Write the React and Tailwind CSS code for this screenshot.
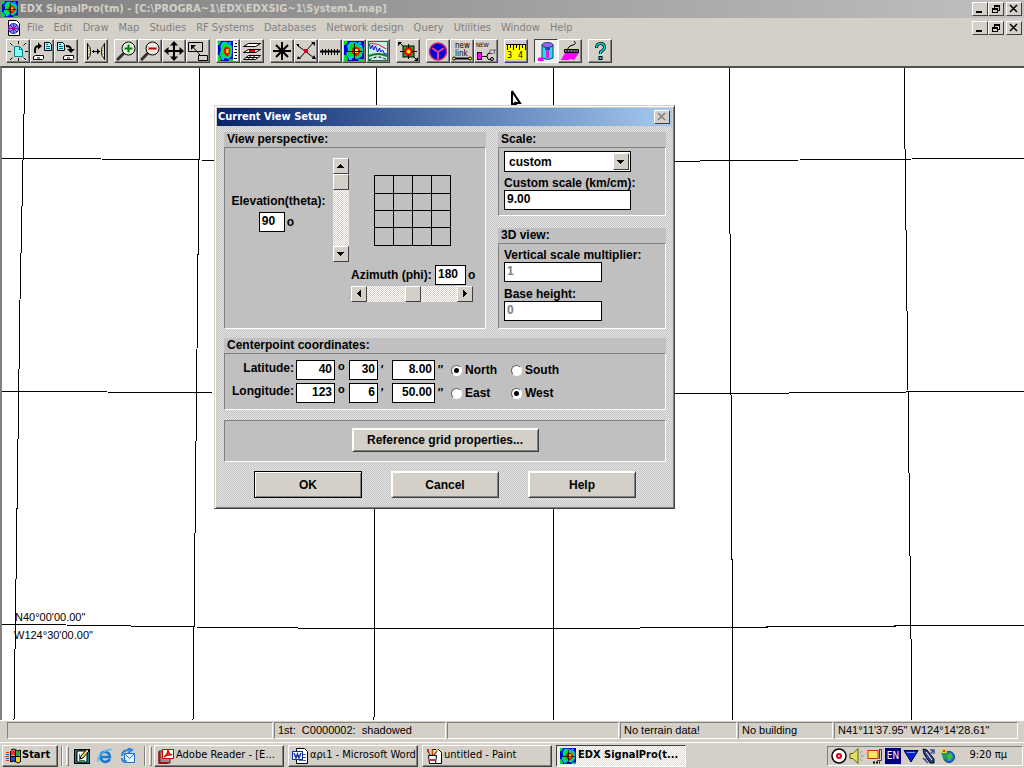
import React from "react";

const RAISED = "border border-t-white border-l-white border-b-[#404040] border-r-[#404040] bg-[#d4d0c8]";
const SUNK = "border border-t-[#808080] border-l-[#808080] border-b-white border-r-white";
const UI = "font-['DejaVu_Sans_Condensed','DejaVu_Sans',sans-serif]";

function Svg({ size = 20, children, className = "" }) {
  return (
    <svg width={size} height={size} viewBox={`0 0 ${size} ${size}`} className={`block shrink-0 ${className}`} fill="none" stroke="#000" strokeWidth="1" aria-hidden="true">
      {children}
    </svg>
  );
}

function HeatMap({ x = 0, w = 20, h = 20, cross = true }) {
  return (
    <svg x={x} width={w} height={h} viewBox="0 0 20 20" preserveAspectRatio="none">
      <rect width="20" height="20" fill="#0000d8" stroke="none" />
      <path d="M3 5l3-4h6l2 2 4 1 1 5-1 6-4 3-5-1-4 1-3-5 2-4z" fill="#00c8f0" stroke="none" />
      <path d="M5 6l2-4h5l2 3 3 1 1 4-2 5-4 2-4-2-3 1-2-4 3-3zM0 0h4L2 4H0zM0 14h2l2 4-1 2H0zM15 18h5v2h-6z" fill="#00e020" stroke="none" />
      <path d="M14 1h3v2h-3zM5 17h3v2H5z" fill="#00c8f0" stroke="none" />
      <path d="M10 6h3l3 2v4l-3 3h-2l-3-3V8z" fill="#f00" stroke="none" />
      <path d="M11 8h3v4h-3z" fill="#ffe800" stroke="none" />
      {cross && <path d="M10.500 2v16M2 10.500h16" stroke="#000" />}
    </svg>
  );
}

const disk = (x, y) => (
  <>
    <path d={`M${x + 0.5} ${y + 1.5}l2-1h8v3l-1 1h-9z`} fill="#fff" />
    <path d={`M${x + 4} ${y + 3}h3`} />
  </>
);
const doc = (x, y) => (
  <>
    <path d={`M${x + 0.5} ${y + 0.5}h5l2 2v6h-7z`} fill="#a8f8ff" />
    <path d={`M${x + 2} ${y + 2.5}h2M${x + 2} ${y + 4.5}h4M${x + 2} ${y + 6.500}h4`} stroke="#006080" />
  </>
);

const ICONS = {
  newDoc: (
    <>
      <path d="M6.500 5.500h5l3 3v7h-8z" fill="#8ff" stroke="#008080" />
      <path d="M11.500 5.500v3h3" stroke="#008080" />
      <path d="M10.500 0v3M10.500 17v3M0 10.500h3M17 10.500h3M2 2l2.500 2.500M18 2l-2.500 2.500M2 19l2.500-2.500M18 19l-2.500-2.500" />
    </>
  ),
  open: (
    <>
      {doc(12, 1)}
      {disk(1, 14)}
      <path d="M3 12V9q0-4 4-4" strokeWidth="2" />
      <path d="M6 1.500v7l4-3.500z" fill="#000" stroke="none" />
    </>
  ),
  save: (
    <>
      {doc(1, 1)}
      {disk(7, 14)}
      <path d="M10 5q5 0 5 4" strokeWidth="2" />
      <path d="M11 8h8l-4 4z" fill="#000" stroke="none" />
    </>
  ),
  between: (
    <>
      <path d="M1.500 2.500v16l1-2q2-1 2-6t-2-6zM18.500 2.500v16l-1-2q-2-1-2-6t2-6z" fill="#ffc" />
      <path d="M2 7h2M2 10h2M2 13h2M16 7h2M16 10h2M16 13h2" stroke="#909040" />
      <path d="M6 10.500h8M7.500 9v3" />
      <path d="M11 7.500v6l3-3z" fill="#000" stroke="none" />
    </>
  ),
  zoomIn: (
    <>
      <path d="M8 12l-7 7" stroke="#303030" strokeWidth="3" />
      <circle cx="12.500" cy="7.500" r="6.500" fill="#e0f4e0" />
      <path d="M12.500 3.500v8M8.500 7.500h8" stroke="#008000" strokeWidth="2" />
    </>
  ),
  zoomOut: (
    <>
      <path d="M8 12l-7 7" stroke="#303030" strokeWidth="3" />
      <circle cx="12.500" cy="7.500" r="6.500" fill="#ece8e4" />
      <path d="M8.500 7.500h8" stroke="#c00000" strokeWidth="2" />
    </>
  ),
  pan: (
    <>
      <path d="M10 3v14M3 10h14" strokeWidth="2" />
      <path d="M10 0l4 4.500H6zM10 20l4-4.500H6zM0 10l4.500-4v8zM20 10l-4.500-4v8z" fill="#000" stroke="none" />
    </>
  ),
  resize: (
    <>
      <path d="M.5 1.500h14v9H.5zM10.500 14.500h9v5h-9z" />
      <path d="M4 5l8 9" />
      <path d="M3 4h5L3 9z" fill="#000" stroke="none" />
    </>
  ),
  mapScale: (
    <>
      <HeatMap w={15} cross={false} />
      <rect x="15" width="5" height="20" fill="#fff" stroke="none" />
      <path d="M17 2.500h2M16 5.500h3M17 8.500h2M16 11.500h3M17 14.500h2M16 17.500h3" />
    </>
  ),
  layers: (
    <>
      <path d="M6.500 2.500h12l-5 3h-12z" fill="#fff" />
      <path d="M6.500 8.500h12l-5 3h-12z" fill="#fff" />
      <path d="M7 10h6" stroke="#e00" strokeWidth="2" />
      <path d="M6.500 14.500h12l-5 4h-12z" fill="#fff" />
      <path d="M4 16.500h12M9 14l-3 5M13 14l-3 5" />
    </>
  ),
  star: <path d="M10 1v18M1 10h18M4 4l12 12M16 4L4 16" strokeWidth="2" />,
  hub: (
    <>
      <path d="M1 4l17 13M3 18L17 2" />
      <path d="M15 1h4v4zM16 18h4l-2-4zM0 3h3v3zM2 15l3 3H1z" fill="#000" stroke="none" />
      <rect x="8" y="8" width="4" height="4" fill="#d00020" stroke="none" />
    </>
  ),
  track: (
    <>
      <path d="M0 10.500h20" strokeWidth="2" />
      <path d="M2.500 8v6M5.500 8v6M8.500 8v6M11.500 8v6M14.500 8v6M17.500 8v6" />
    </>
  ),
  heat: <HeatMap />,
  profile: (
    <>
      <rect x="0.500" y="0.500" width="19" height="19" fill="#d0ecec" stroke="#207040" />
      <path d="M1.500 2q9 0 17 6" stroke="#e02020" />
      <path d="M1.500 3l1 5 2-4 1 5 2-4 2 6 2-4 1 4 2-2 2 4 3 0" stroke="#0000e0" />
      <path d="M1 15q9-4 18 0" stroke="#008020" strokeWidth="2" />
      <path d="M1 19q9-6 18 0" strokeDasharray="3 2" />
    </>
  ),
  target: (
    <>
      <rect x="5" y="5" width="11" height="11" fill="#00c020" />
      <circle cx="10.500" cy="10.500" r="4.500" fill="#f00" stroke="none" />
      <circle cx="10.500" cy="10.500" r="2" fill="#ff0" stroke="none" />
      <path d="M10.500 3v4M10.500 14v4M2 10.500h5M14 10.500h5M1 1l4 4M20 20l-4-4" />
      <path d="M0 1h4L0 5zM20 20h-4l4-4z" fill="#000" stroke="none" />
    </>
  ),
  sector: (
    <>
      <circle cx="10" cy="10.500" r="8.500" fill="#0000e0" stroke="#d02060" strokeWidth="1.500" />
      <path d="M10 10v8M10 11L4 7M10 11l6-4" stroke="#f04080" strokeWidth="2" />
    </>
  ),
  newLink: (
    <>
      <text x="3" y="7" fontSize="8" fill="#000" stroke="none" fontFamily="DejaVu Sans Condensed">new</text>
      <text x="3" y="15" fontSize="8" fill="#000" stroke="none" fontFamily="DejaVu Sans Condensed">link</text>
      <path d="M2 17.500h17" strokeWidth="2" />
      <circle cx="2" cy="17.500" r="1.500" fill="#ff0" />
      <circle cx="18" cy="17.500" r="1.500" fill="#ff0" />
    </>
  ),
  newCt: (
    <>
      <text x="0" y="6" fontSize="6" fill="#000" stroke="none" fontFamily="DejaVu Sans Condensed">NEW</text>
      <text x="13" y="13" fontSize="6" fill="#000" stroke="none" fontFamily="DejaVu Sans Condensed">CT</text>
      <rect x="1.500" y="11.500" width="4" height="7" fill="#f0f" />
      <path d="M6 15.500h5M14 12q-3 0-3 3.500t4 3.500" />
      <circle cx="16" cy="18" r="1.500" />
    </>
  ),
  ruler: (
    <>
      <rect x="0" y="3" width="20" height="15" fill="#ff0" stroke="none" />
      <path d="M0 3.500h20M1.500 4v5M4.500 4v3M7.500 4v5M10.500 4v3M13.500 4v5M16.500 4v3M19.500 4v5" />
      <text x="1" y="17" fontSize="8" fill="#000" stroke="none" fontFamily="DejaVu Sans">3</text>
      <text x="12" y="17" fontSize="8" fill="#000" stroke="none" fontFamily="DejaVu Sans">4</text>
    </>
  ),
  cylinder: (
    <>
      <path d="M6 4v13q6 3 11 0V4z" fill="#20e0f0" stroke="#104060" />
      <ellipse cx="11.500" cy="4" rx="5.500" ry="2.500" fill="#a060f0" stroke="#104060" />
      <path d="M11.500 8v9" stroke="#d020f0" strokeWidth="3" />
      <path d="M9 8h5" stroke="#2040c0" strokeWidth="2" />
      <path d="M2 20v-3l4-1 2 4z" fill="#f0f" stroke="none" />
    </>
  ),
  brush: (
    <>
      <path d="M14 0q3 3-1 4T9 6q-2 1 0 3" />
      <path d="M4.500 8.500h14v3h-14z" fill="#808080" />
      <path d="M7 9v3M10 9v3M13 9v3M16 9v3" />
      <path d="M5 12h14l-5 7-3-1-3 1H1z" fill="#f0f" stroke="none" />
    </>
  ),
  help: (
    <>
      <path d="M6.500 7q0-4.500 4-4.500t4 4q0 2-4 4.500v2" stroke="#000" strokeWidth="3" />
      <path d="M6.500 6.500q0-4 4-4t4 4q0 2-4 4.500v2" stroke="#0dd" strokeWidth="1.500" />
      <rect x="9" y="15.500" width="3" height="3" fill="#0dd" />
    </>
  ),
};

const TOOL_GROUPS = [
  [["New", "newDoc"], ["Open", "open"], ["Save", "save"]],
  [["Distance between", "between"]],
  [["Zoom in", "zoomIn"], ["Zoom out", "zoomOut"], ["Pan", "pan"], ["Resize view", "resize"]],
  [["Map legend", "mapScale"], ["Layers", "layers"]],
  [["Radials", "star"], ["Hub", "hub"], ["Route", "track"], ["Coverage", "heat"], ["Path profile", "profile"]],
  [["Center view", "target"]],
  [["Sector", "sector"], ["New link", "newLink"], ["New CT", "newCt"]],
  [["Measure", "ruler"]],
  [["Buildings", "cylinder"], ["Clutter brush", "brush"]],
  [["Help", "help"]],
];

const MENUS = ["File", "Edit", "Draw", "Map", "Studies", "RF Systems", "Databases", "Network design", "Query", "Utilities", "Window", "Help"];

function WinButton({ kind, label }) {
  return (
    <button type="button" aria-label={label} className={`flex h-[14px] w-4 items-center justify-center ${RAISED}`}>
      <svg width="10" height="10" viewBox="0 0 10 10" fill="none" stroke="#000" shapeRendering="crispEdges">
        {kind === "min" && <path d="M1 8h6" strokeWidth="2" />}
        {kind === "max" && <path d="M3 1h6M3 2.500h6M3.500 1v3M8.500 2v4M7 6.500h2M1 4h6M1 5.500h6M1.500 4v5M6.500 4v5M1 8.500h6" />}
        {kind === "close" && <path d="M1 1l7 7M8 1L1 8" strokeWidth="1.500" shapeRendering="auto" />}
      </svg>
    </button>
  );
}

function WinButtons() {
  return (
    <div className="ml-auto flex gap-[2px] pr-[2px]">
      <div className="flex">
        <WinButton kind="min" label="Minimize" />
        <WinButton kind="max" label="Restore" />
      </div>
      <WinButton kind="close" label="Close" />
    </div>
  );
}

function Group({ title, className = "", boxClass = "", children }) {
  return (
    <section className={`flex flex-col ${className}`}>
      {title && <h2 className="h-[15px] bg-[#c0c0c0] pl-[3px] leading-[14px]">{title}</h2>}
      <div className={`grow bg-[#c0c0c0] ${SUNK} ${boxClass}`}>{children}</div>
    </section>
  );
}

function Box({ className = "", ...rest }) {
  return <input type="text" className={`h-5 border border-black bg-white px-[2px] pb-[2px] outline-none disabled:text-[#808080] ${className}`} {...rest} />;
}

function Arrow({ d, label }) {
  return (
    <button type="button" aria-label={label} className={`flex h-4 w-4 shrink-0 items-center justify-center ${RAISED}`}>
      <svg width="8" height="8" viewBox="0 0 8 8" shapeRendering="crispEdges"><path d={d} /></svg>
    </button>
  );
}

const TRACK =
  "m-0 appearance-none bg-[repeating-conic-gradient(#fff_0_25%,#d4d0c8_0_50%)] bg-[length:2px_2px] [&::-webkit-slider-thumb]:appearance-none [&::-webkit-slider-thumb]:h-4 [&::-webkit-slider-thumb]:w-4 [&::-webkit-slider-thumb]:border [&::-webkit-slider-thumb]:border-t-white [&::-webkit-slider-thumb]:border-l-white [&::-webkit-slider-thumb]:border-b-[#404040] [&::-webkit-slider-thumb]:border-r-[#404040] [&::-webkit-slider-thumb]:bg-[#d4d0c8]";

function Radio({ name, label, checked }) {
  return (
    <label className="flex items-center gap-[3px]">
      <input
        type="radio"
        name={name}
        defaultChecked={checked}
        className="m-0 h-[11px] w-[11px] shrink-0 appearance-none rounded-full border border-t-[#606060] border-l-[#606060] border-b-white border-r-white bg-white checked:bg-[radial-gradient(circle,#000_2px,#fff_3px)]"
      />
      {label}
    </label>
  );
}

function CoordRow({ name, values, radios }) {
  const cell = "w-full text-right";
  return (
    <div className="grid grid-cols-[68px_39px_14px_29px_14px_43px_16px_60px_60px] items-center">
      <span className="pr-[2px] pb-1 text-right">{name}:</span>
      <Box className={cell} aria-label={`${name} degrees`} defaultValue={values[0]} />
      <span className="pb-2 pl-[3px] text-[11px] leading-3">o</span>
      <Box className={cell} aria-label={`${name} minutes`} defaultValue={values[1]} />
      <span className="pl-[2px] italic leading-4">'</span>
      <Box className={cell} aria-label={`${name} seconds`} defaultValue={values[2]} />
      <span className="pl-[2px] italic leading-4">''</span>
      {radios.map((r) => (
        <Radio key={r[0]} name={name} label={r[0]} checked={r[1]} />
      ))}
    </div>
  );
}

function DialogButton({ children, isDefault, className = "w-[108px]" }) {
  return (
    <button
      type="button"
      className={`border bg-[#d4d0c8] shadow-[inset_1px_1px_0_#fff,inset_-1px_-1px_0_#808080] ${isDefault ? "border-black" : "border-t-white border-l-white border-b-[#404040] border-r-[#404040]"} ${className}`}
    >
      {children}
    </button>
  );
}

function Dialog() {
  return (
    <div
      role="dialog"
      aria-label="Current View Setup"
      className="absolute top-[37px] left-[212px] w-[461px] border border-t-[#d4d0c8] border-l-[#d4d0c8] border-b-[#404040] border-r-[#404040] bg-[#d4d0c8] p-[2px] font-['Liberation_Sans',Arial,sans-serif] text-[12px] leading-[14px] font-bold text-black shadow-[inset_1px_1px_0_#fff,inset_-1px_-1px_0_#808080]"
    >
      <div className="flex h-[18px] items-center bg-linear-to-r from-[#0a246a] to-[#a6caf0] pr-[2px] pl-[1px]">
        <h1 className={`text-[11px] text-white ${UI}`}>Current View Setup</h1>
        <button type="button" aria-label="Close dialog" className={`ml-auto flex h-[14px] w-4 items-center justify-center ${RAISED}`}>
          <svg width="10" height="10" viewBox="0 0 10 10" fill="none" stroke="#808080" strokeWidth="1.500"><path d="M1 1l7 7M8 1L1 8" /></svg>
        </button>
      </div>
      <div className="mt-[1px] flex flex-col bg-[repeating-conic-gradient(#e8e8e8_0_25%,#c0c0c0_0_50%)] bg-[length:2px_2px] pt-[5px] pr-[6px] pb-[8px] pl-[7px]">
        <div className="flex gap-3">
          <Group title="View perspective:" className="grow" boxClass="flex pl-[6px]">
            <div className="flex w-[95px] flex-col items-center pt-[46px]">
              <label htmlFor="theta">Elevation(theta):</label>
              <div className="mt-1 flex items-center gap-[2px] pr-[4px]">
                <Box id="theta" className="w-[26px]" defaultValue="90" />
                <span>o</span>
              </div>
            </div>
            <div className="mt-[10px] ml-[7px] flex h-[104px] w-4 flex-col">
              <Arrow label="Raise elevation" d="M0 6h7l-3-4h-1z" />
              <input type="range" aria-label="Elevation" defaultValue="0" className={`min-h-0 w-4 grow [writing-mode:vertical-lr] ${TRACK}`} />
              <Arrow label="Lower elevation" d="M0 2h7l-3 4h-1z" />
            </div>
            <div className="flex grow flex-col pt-[27px] pl-[2px]">
              <svg width="78" height="72" viewBox="0 0 78 72" className="ml-[23px]" stroke="#000" fill="none" shapeRendering="crispEdges" aria-hidden="true">
                <path d="M.5.5h76v70H.5zM19.500.5v70M38.500.5v70M57.500.5v70M.5 18.500h76M.5 35.500h76M.5 52.500h76" />
              </svg>
              <div className="mt-[18px] flex items-center">
                <label htmlFor="phi" className="w-[84px] whitespace-nowrap">Azimuth (phi):</label>
                <Box id="phi" className="w-[31px]" defaultValue="180" />
                <span className="pl-[2px]">o</span>
              </div>
              <div className="mt-[1px] flex h-4 w-[122px]">
                <Arrow label="Decrease azimuth" d="M6 0v7l-4-3v-1z" />
                <input type="range" aria-label="Azimuth" defaultValue="51" className={`h-4 min-w-0 grow ${TRACK}`} />
                <Arrow label="Increase azimuth" d="M2 0v7l4-3v-1z" />
              </div>
            </div>
          </Group>
          <div className="flex w-[168px] shrink-0 flex-col gap-3">
            <Group title="Scale:" boxClass="flex flex-col pt-[3px] pb-[5px] pl-[5px]">
              <div className="relative w-[127px]">
                <select aria-label="Scale" className="h-[21px] w-full appearance-none border border-black bg-white pl-[4px] outline-none">
                  <option>custom</option>
                </select>
                <span className={`pointer-events-none absolute top-[2px] right-[2px] flex h-[17px] w-4 items-center justify-center ${RAISED}`}>
                  <svg width="8" height="8" viewBox="0 0 8 8" shapeRendering="crispEdges"><path d="M0 2h7l-3 4h-1z" /></svg>
                </span>
              </div>
              <label htmlFor="km" className="mt-1 whitespace-nowrap">Custom scale (km/cm):</label>
              <Box id="km" className="w-[127px]" defaultValue="9.00" />
            </Group>
            <Group title="3D view:" boxClass="flex flex-col pt-[4px] pb-[7px] pl-[5px]">
              <label htmlFor="vs" className="whitespace-nowrap">Vertical scale multiplier:</label>
              <Box id="vs" className="w-[98px]" defaultValue="1" disabled />
              <label htmlFor="bh" className="mt-[5px]">Base height:</label>
              <Box id="bh" className="w-[98px]" defaultValue="0" disabled />
            </Group>
          </div>
        </div>
        <Group title="Centerpoint coordinates:" className="mt-[9px]" boxClass="flex flex-col gap-[3px] py-[6px] pl-[3px]">
          <CoordRow name="Latitude" values={["40", "30", "8.00"]} radios={[["North", true], ["South", false]]} />
          <CoordRow name="Longitude" values={["123", "6", "50.00"]} radios={[["East", false], ["West", true]]} />
        </Group>
        <Group className="mt-[10px]" boxClass="flex justify-center pt-[7px] pb-[9px]">
          <DialogButton className="h-6 w-[187px]">Reference grid properties...</DialogButton>
        </Group>
        <div className="mt-[9px] flex h-[27px] justify-between px-[30px]">
          <DialogButton isDefault>OK</DialogButton>
          <DialogButton>Cancel</DialogButton>
          <DialogButton>Help</DialogButton>
        </div>
      </div>
    </div>
  );
}

function MapView() {
  return (
    <main className="relative grow overflow-hidden border-t-2 border-l-2 border-t-[#505048] border-l-[#808080] bg-white">
      <svg className="absolute inset-0 h-full w-full" viewBox="2 68 1022 652" preserveAspectRatio="none" fill="none" stroke="#000" shapeRendering="crispEdges" aria-hidden="true">
        <path d="M25 68L20 300 14 720M200 68L197 350 193 720M377 68L374 720M553 68V720M729 68L733 720M904 68L908 390 912 720" />
        <path d="M2 158L200 160 400 162 600 162 800 160 1024 158M2 391L212 393 440 395 674 394 1024 391M2 624L195 627 400 629 640 628 1024 625" />
      </svg>
      <svg className="absolute top-[21px] left-[508px]" width="14" height="20" viewBox="0 0 14 20" aria-hidden="true">
        <path d="M2 2v15l3-3 3 6M2 2l8 12H6" fill="#fff" stroke="#000" strokeWidth="2" />
      </svg>
      <p className="absolute bottom-[96px] left-[13px] font-['Liberation_Sans',Arial,sans-serif] text-[11px] leading-[14px]">N40°00'00.00"</p>
      <p className="absolute bottom-[78px] left-[12px] font-['Liberation_Sans',Arial,sans-serif] text-[11px] leading-[14px]">W124°30'00.00"</p>
      <Dialog />
    </main>
  );
}

function Grip() {
  return (
    <span className="flex h-5 gap-[3px]">
      <i className="w-[2px] border-r border-l border-l-[#808080] border-r-white" />
      <i className="w-[3px] border border-white border-r-[#808080] border-b-[#808080]" />
    </span>
  );
}

function Task({ icon, children, active }) {
  return (
    <button
      type="button"
      className={`flex h-[22px] w-[130px] items-center gap-[2px] overflow-hidden whitespace-nowrap border pl-[3px] ${active ? "border-t-[#404040] border-l-[#404040] border-b-white border-r-white bg-[repeating-conic-gradient(#fff_0_25%,#dedbd5_0_50%)] bg-[length:2px_2px] font-bold" : "border-t-white border-l-white border-b-[#404040] border-r-[#404040] shadow-[inset_-1px_-1px_0_#808080]"}`}
    >
      {icon}
      {children}
    </button>
  );
}

function Taskbar() {
  return (
    <footer className={`flex h-[26px] shrink-0 items-center border-t border-white bg-[#d4d0c8] pl-[2px] text-[11px] ${UI}`}>
      <button type="button" className={`flex h-[22px] w-[56px] items-center gap-[1px] pl-[2px] font-bold shadow-[inset_-1px_-1px_0_#808080] ${RAISED}`}>
        <Svg size={16}>
          <path d="M6 3q3-2 4 0v5q-2-2-4 0z" fill="#f03020" stroke="none" />
          <path d="M11 3q2 1 4-1v5q-2 2-4 1z" fill="#20b040" stroke="none" />
          <path d="M6 9q2-2 4 0v5q-2-2-4 0z" fill="#2050e0" stroke="none" />
          <path d="M11 9q2 1 4-1v5q-2 2-4 1z" fill="#f8d800" stroke="none" />
          <path d="M5.500 3v11M10.500 2v12M15.500 2v12M6 8.500h9M6 2q3-2 5 0t4 0M6 14q3-2 5 0t4 0" />
          <path d="M1 4.500h3M0 8.500h4M1 12.500h3" stroke="#e03020" />
          <path d="M1 6.500h3M1 10.500h3" stroke="#2050c0" />
        </Svg>
        Start
      </button>
      <div className="ml-[3px]"><Grip /></div>
      <div className="ml-[5px] flex gap-[7px]">
        <Svg size={16}>
          <rect x="0.500" y="1.500" width="15" height="14" fill="#207898" />
          <path d="M3 3h10v11H3z" fill="#fff" />
          <path d="M6 11l1-3 6-7 2 2-6 7z" fill="#f8d060" />
          <path d="M5 12.500h6M5.500 6v6" stroke="#208040" />
        </Svg>
        <Svg size={16}>
          <path d="M13 11q-2 3-5 3-4.500-1-4.500-5.500T8 4q4.500 0 5 5H5" stroke="#1878d0" strokeWidth="2.500" />
          <path d="M1 14Q0 9 6 4.500T15 2" stroke="#50b8f0" strokeWidth="1.500" />
        </Svg>
        <Svg size={16}>
          <path d="M4.500 5.500h10v9h-10z" fill="#e8f4ff" stroke="#2070c8" />
          <path d="M4.500 5.500l5 5 5-5" stroke="#2070c8" />
          <path d="M2 8q0-6 7-6M8 0l4 2-4 3M2 10q0 4 4 4l-1-2" stroke="#3080d8" strokeWidth="2" />
        </Svg>
      </div>
      <div className="ml-[8px]"><Grip /></div>
      <div className="ml-[2px] flex gap-1">
        <Task icon={<Svg size={16}><path d="M1 3h11v12H1z" fill="#909090" stroke="#602020" /><path d="M4.500 1.500h11v9h-11z" fill="#fff" stroke="#c00000" /><path d="M6 9q4-3 4-7 0 4 4 5-4-1-8 2" stroke="#e00000" strokeWidth="1.500" /><path d="M1.500 4v11h9" stroke="#a01010" strokeWidth="2" /></Svg>}>Adobe Reader - [E...</Task>
        <Task icon={<Svg size={16}><path d="M4.500.5h8l3 3v12h-11z" fill="#fff" /><path d="M11 6.500h3M11 9.500h3M7 12.500h7" stroke="#4060c0" /><rect x="0.500" y="3.500" width="10" height="8" fill="#fff" stroke="#1030a0" /><path d="M2 5l2 5 1.500-4L7 10l2-5" stroke="#1030a0" strokeWidth="1.500" /></Svg>}>αρι1 - Microsoft Word</Task>
        <Task icon={<Svg size={16}><path d="M6.500 1.500h6l3 3v11h-9z" fill="#fff" /><path d="M2.500 7.500h8l-1 8h-6z" fill="#fff" /><path d="M4 7L2 3M6.500 7V1M8 7l3-4" stroke="#a04010" strokeWidth="1.500" /><path d="M1 1h2v3H1z" fill="#e02020" stroke="none" /><path d="M10 1h2v2h-2z" fill="#f0c000" stroke="none" /><path d="M4 11h5v2H4z" fill="#d03030" stroke="none" /></Svg>}>untitled - Paint</Task>
        <Task active icon={<Svg size={16}><HeatMap w={16} h={16} /></Svg>}>EDX SignalPro(t...</Task>
      </div>
      <div className={`mr-[1px] ml-auto flex h-5 w-[196px] items-center pl-[3px] ${SUNK}`}>
        <div className="flex gap-[2px]">
          <Svg size={16}><circle cx="8" cy="8" r="7" fill="#fff" strokeWidth="1.500" /><circle cx="8" cy="8" r="3" fill="#e00020" stroke="none" /><path d="M7 7h2v2H7z" fill="#f8a0a0" stroke="none" /></Svg>
          <Svg size={16}><path d="M1 5.500h3l5-5v15l-5-5H1z" fill="#e8e060" stroke="#606000" /><path d="M11 5l2-2M11.500 8H15M11 11l2 2" stroke="#909090" /></Svg>
          <Svg size={16}><path d="M1 2.500h10v8H1z" fill="#ffe860" stroke="#c03000" /><path d="M12 1.500h2.500v11H10M12.500 2v9" stroke="#404040" /><path d="M6 14.500h7" stroke="#000" strokeWidth="2" strokeDasharray="2 1" /></Svg>
          <span className="flex h-4 w-4 items-center justify-center bg-[#000080] text-[10px] text-white">EN</span>
          <Svg size={16}><path d="M1 2.500h14L8 14z" fill="#0020e0" stroke="#000040" /><path d="M4 4.500h8" stroke="#80a0ff" /></Svg>
          <Svg size={16}><path d="M2 1l4 1 7 9v4H9L3 6z" fill="#304080" /><path d="M4 12l8-9M9 2h4v4M2 10l5 5" stroke="#405090" strokeWidth="1.500" /><path d="M5 4l6 8" stroke="#fff" /></Svg>
          <Svg size={16}><circle cx="10" cy="9" r="5.500" fill="#2070d0" stroke="#104080" /><path d="M7 7l5-2 2 4-4 4z" fill="#40c040" stroke="none" /><circle cx="5" cy="4" r="3" fill="#f0d020" stroke="none" /><path d="M2 5h6l1 7-5-2z" fill="#20a050" stroke="none" /><path d="M4 2h2v2H4z" fill="#e03020" stroke="none" /></Svg>
        </div>
        <time className="ml-auto pr-[15px]">9:20 πμ</time>
      </div>
    </footer>
  );
}

export default function App() {
  const cell = `flex h-[17px] items-center overflow-hidden whitespace-nowrap pl-[3px] ${SUNK}`;
  return (
    <div className="flex min-h-screen flex-col bg-[#d4d0c8] text-black">
      <header className={`text-[11px] ${UI}`}>
        <div className="flex h-[18px] items-center bg-linear-to-r from-[#808080] to-[#c0c0c0] pl-[2px]">
          <Svg size={16}><HeatMap w={16} h={16} /></Svg>
          <h1 className="pl-[2px] font-bold whitespace-nowrap text-[#d4d0c8]">EDX SignalPro(tm) - [C:\PROGRA~1\EDX\EDXSIG~1\System1.map]</h1>
          <WinButtons />
        </div>
        <div className="flex h-[20px] items-center pl-[6px]">
          <Svg size={16}>
            <path d="M2.500.5h8l3 3v12h-11z" fill="#fff" />
            <circle cx="7.500" cy="8.500" r="5" fill="#8090ff" stroke="#2020c0" />
            <path d="M7.500 4v9M3 8.500h9" stroke="#c00060" />
            <path d="M4 5l7 7M11 5l-7 7" stroke="#2020c0" />
          </Svg>
          <nav className="flex text-[#808080]">
            {MENUS.map((m) => (
              <button type="button" key={m} className="px-[5px] whitespace-nowrap">{m}</button>
            ))}
          </nav>
          <WinButtons />
        </div>
        <div className="flex h-[28px] items-center gap-[6px] pb-[2px] pl-[6px]">
          {TOOL_GROUPS.map((g, i) => (
            <div key={i} className="flex">
              {g.map(([label, icon]) => (
                <button
                  type="button"
                  key={icon}
                  aria-label={label}
                  className={`flex h-6 w-6 items-center justify-center border ${icon === "cylinder" ? "border-t-[#404040] border-l-[#404040] border-b-white border-r-white bg-[#f0eeea]" : "border-t-white border-l-white border-b-[#404040] border-r-[#404040] shadow-[inset_-1px_-1px_0_#808080]"}`}
                >
                  <Svg>{ICONS[icon]}</Svg>
                </button>
              ))}
            </div>
          ))}
        </div>
      </header>
      <MapView />
      <div className="grid h-[22px] shrink-0 grid-cols-[266px_172px_172px_117px_95px_1fr] items-center gap-[1px] border-t border-white pr-[6px] pb-[2px] pl-[7px] font-['Liberation_Sans',Arial,sans-serif] text-[11px]">
        <div className={cell} />
        <div className={`${cell} whitespace-pre`}>{"1st:  C0000002:  shadowed"}</div>
        <div className={cell} />
        <div className={cell}>No terrain data!</div>
        <div className={cell}>No building</div>
        <div className={cell}>N41°11'37.95" W124°14'28.61"</div>
      </div>
      <Taskbar />
    </div>
  );
}
